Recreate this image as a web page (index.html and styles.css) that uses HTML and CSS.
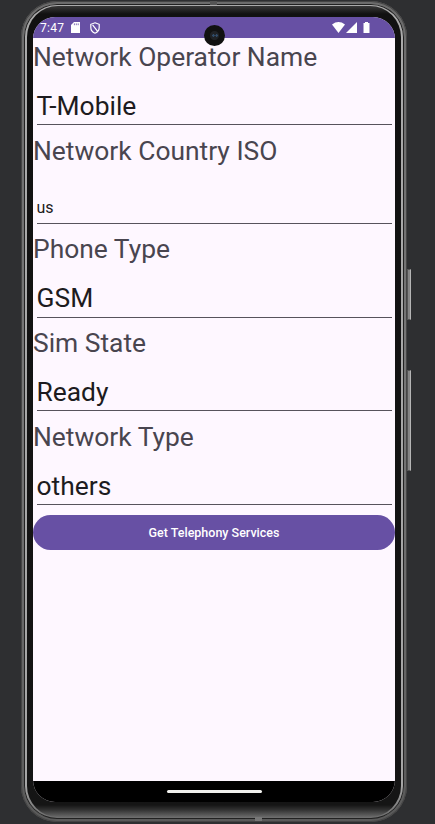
FILE: index.html
```html
<!DOCTYPE html>
<html lang="en">
<head>
<meta charset="utf-8">
<title>Telephony Services</title>
<link rel="stylesheet" href="styles.css">
</head>
<body>
<div class="phone">
  <span class="side-button power"></span>
  <span class="side-button volume"></span>
  <span class="antenna antenna-top"></span>
  <span class="antenna antenna-bottom"></span>
  <div class="rim"><div class="bezel">
    <main class="screen">
      <header class="status">
        <span class="clock">7:47</span>
        <svg class="sd" width="9" height="11" viewBox="0 0 9 11"><path fill="#fff" d="M3 0H9V11H0V3Z"/><path stroke="#6750a4" stroke-width=".8" d="M3.4 1.4V3.2M5.3 1.4V3.2M7.2 1.4V3.2"/></svg>
        <svg class="shield" width="10" height="12" viewBox="0 0 10 12"><path fill="none" stroke="#fff" stroke-width="1.2" d="M5 .8L9.2 2.3V5.5C9.2 8.2 7.4 10.2 5 11.2C2.6 10.2.8 8.2.8 5.5V2.3ZM2.6 2.8L7.4 9.2"/></svg>
        <span class="grow"></span>
        <svg class="wifi" width="13" height="11" viewBox="0 0 13 11"><path fill="#fff" d="M0 2.5Q6.5-2.4 13 2.5L6.5 11Z"/></svg>
        <svg class="signal" width="11" height="11" viewBox="0 0 11 11"><path fill="#fff" d="M11 0V11H0Z"/></svg>
        <svg class="battery" width="7" height="11" viewBox="0 0 7 11"><path fill="#fff" d="M2 0H5V1H6.5V11H.5V1H2Z"/></svg>
      </header>
      <span class="camera"></span>
      <section class="content">
        <div class="row"><div class="label">Network Operator Name</div><div class="field">T-Mobile</div></div>
        <div class="row row-tall"><div class="label">Network Country ISO</div><div class="field field-small">us</div></div>
        <div class="row"><div class="label">Phone Type</div><div class="field">GSM</div></div>
        <div class="row"><div class="label">Sim State</div><div class="field">Ready</div></div>
        <div class="row"><div class="label">Network Type</div><div class="field">others</div></div>
        <button class="action">Get Telephony Services</button>
      </section>
      <footer class="nav"><span class="handle"></span></footer>
    </main>
  </div></div>
</div>
</body>
</html>
```
FILE: styles.css
```css
* { box-sizing: border-box; }
body {
  margin: 0;
  height: 824px;
  overflow: hidden;
  background: #2e2f31;
  font-family: Roboto, sans-serif;
}
.phone {
  position: relative;
  width: 386px;
  height: 821px;
  margin: 1px 0 0 21px;
  padding: 3px;
  border-radius: 36px;
  background: linear-gradient(#6c6c6c, #777 50%, #5a5a5a);
  box-shadow: inset 0 0 0 1px #454545;
}
.rim {
  height: 100%;
  padding: 2px 3px;
  border-radius: 33px;
  background: linear-gradient(#aaa 0, #a5a5a5 96%, #6a6a6a);
  box-shadow: inset 0 0 0 1px #222;
}
.bezel {
  height: 100%;
  padding: 11px 6px 0;
  border-radius: 31px;
  background: linear-gradient(#393939 0, #111 8px, #151515 calc(100% - 12px), #333 calc(100% - 7px), #696969);
}
.screen {
  display: flex;
  flex-direction: column;
  position: relative;
  width: 362px;
  height: 785px;
  overflow: hidden;
  border-radius: 22px;
  background: #fef7ff;
}
.status {
  display: flex;
  align-items: center;
  height: 21px;
  padding: 0 25px 0 7px;
  background: #6750a4;
  color: #fff;
}
.clock { width: 31px; font-size: 12px; letter-spacing: .3px; }
.shield { margin-left: 10px; }
.grow { flex: 1; }
.signal { margin-left: 1px; }
.battery { margin-left: 6px; }
.camera {
  position: absolute;
  left: 171px;
  top: 8px;
  width: 21px;
  height: 21px;
  border-radius: 50%;
  background: radial-gradient(circle at 45% 50%, #304b68 0 1px, transparent 1.5px), radial-gradient(circle at 60% 50%, #304b68 0 1px, transparent 1.5px), radial-gradient(circle, #202226 0 4px, #111 5px);
}
.content { flex: 1; }
.row { display: flex; flex-direction: column; height: 93.7px; padding-bottom: 6.5px; }
.row-tall { height: 98.8px; }
.label {
  height: 38px;
  color: #49454f;
  font-size: 26.4px;
  line-height: 38.5px;
  white-space: nowrap;
}
.field {
  display: flex;
  align-items: flex-end;
  flex: 1;
  margin: 0 3.5px;
  padding: 0 0 2.5px;
  border-bottom: 1px solid #57535c;
  color: #1d1b20;
  font-size: 26.4px;
  line-height: 32px;
}
.field-small { padding-bottom: 4.5px; font-size: 16px; line-height: 20px; }
.action {
  display: block;
  width: 100%;
  height: 35px;
  margin-top: 3px;
  padding: 0;
  border: 0;
  border-radius: 18px;
  background: #6750a4;
  color: #fff;
  font: 500 12.5px/35px Roboto, sans-serif;
}
.nav { display: flex; justify-content: center; height: 21px; padding-top: 9px; background: #000; }
.handle { width: 95px; height: 3px; border-radius: 2px; background: #f1f1ee; }
.side-button {
  position: absolute;
  left: 386px;
  width: 4px;
  border: 1px solid #555;
  border-right-color: #b5b5b5;
  background: #858585;
}
.power { top: 268px; height: 51px; }
.volume { top: 369px; height: 101px; }
.antenna { position: absolute; z-index: 1; width: 7px; height: 4px; background: #555; }
.antenna-top { left: 189px; top: 0; }
.antenna-bottom { left: 234px; bottom: 1px; background: #777; }
```
